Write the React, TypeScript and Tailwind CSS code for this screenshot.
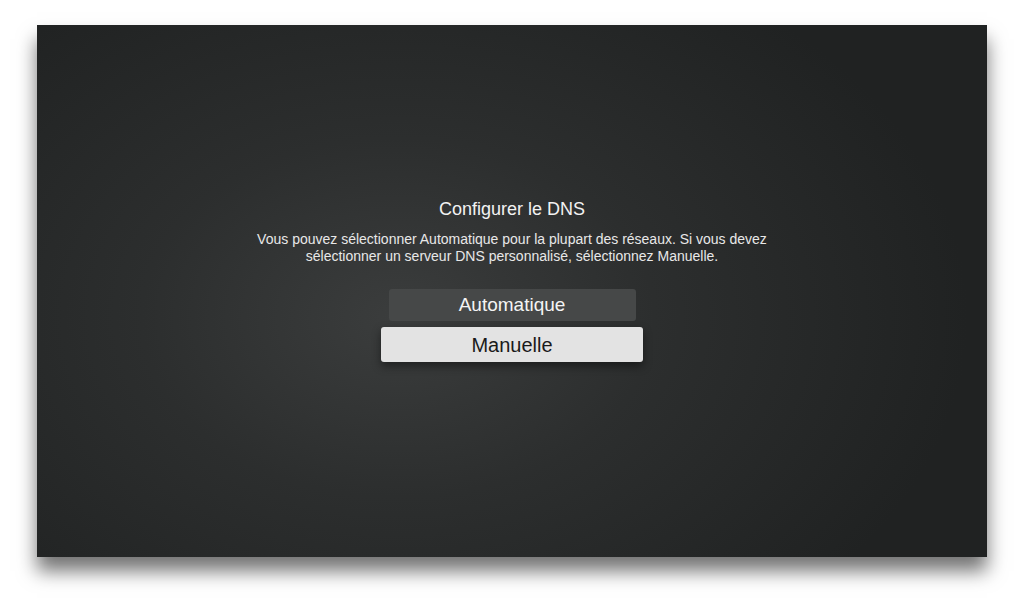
export default function App() {
  return (
    <div className="w-[1024px] h-[608px] bg-white pt-[25px] pl-[37px] overflow-hidden">
      <div
        className="w-[950px] h-[532px] flex flex-col items-center pt-[173px] shadow-[0_14px_18px_rgba(0,0,0,0.55)] bg-[radial-gradient(ellipse_60%_75%_at_38%_55%,#3b3d3d_0%,#2c2e2e_45%,#202222_100%)]"
        style={{ fontFamily: '"Liberation Sans", Arial, sans-serif' }}
      >
        <h1 className="text-[18px] leading-[22px] text-[#f2f2f2]">Configurer le DNS</h1>
        <p className="mt-[11px] text-[14px] leading-[17px] text-[#e8e8e8] text-center w-[600px]">
          Vous pouvez sélectionner Automatique pour la plupart des réseaux. Si vous devez
          <br />
          sélectionner un serveur DNS personnalisé, sélectionnez Manuelle.
        </p>
        <div className="mt-[24px] flex flex-col items-center gap-[6px]">
          <div className="w-[247px] h-[32px] rounded-[3px] bg-[#464848] flex items-center justify-center text-[19px] text-[#f4f4f4]">
            Automatique
          </div>
          <div className="w-[262px] h-[35px] rounded-[3px] bg-[#e3e3e3] flex items-center justify-center text-[20px] text-[#1a1a1a] shadow-[0_4px_10px_rgba(0,0,0,0.45)]">
            Manuelle
          </div>
        </div>
      </div>
    </div>
  );
}
